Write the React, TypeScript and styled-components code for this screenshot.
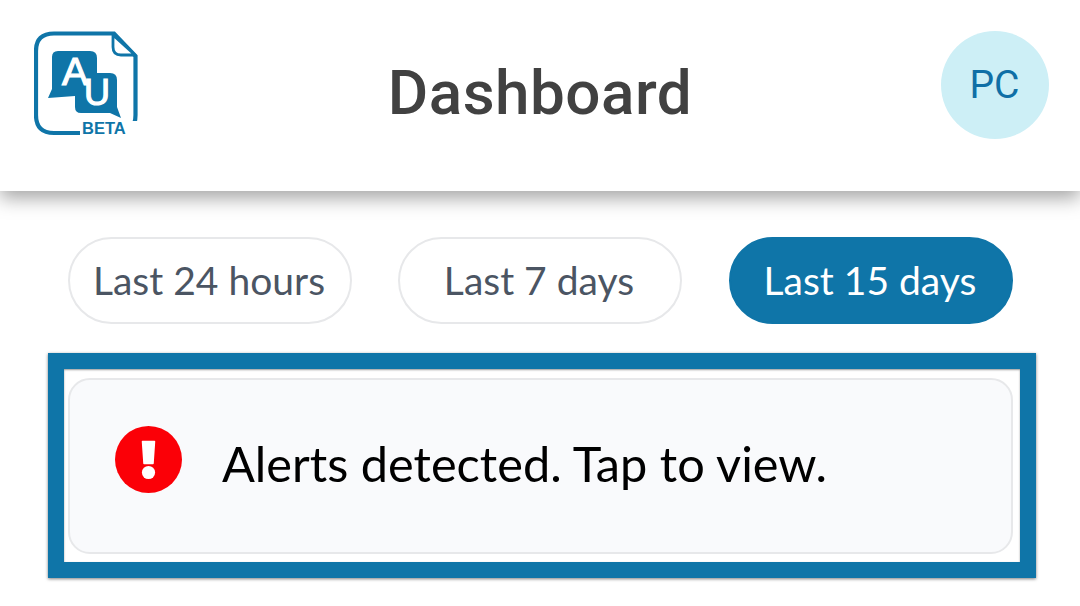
import React from "react";
import styled, { createGlobalStyle } from "styled-components";

const GlobalStyle = createGlobalStyle`
  html, body {
    margin: 0;
    padding: 0;
    background: #fff;
  }
  body {
    width: 1080px;
    height: 606px;
    overflow: hidden;
    font-family: "Lato", sans-serif;
  }
`;

const Header = styled.header`
  height: 191px;
  box-sizing: border-box;
  padding: 31px 31px 0 34px;
  display: flex;
  justify-content: space-between;
  align-items: flex-start;
  background: #fff;
  box-shadow: 0 7px 18px rgba(0, 0, 0, 0.36);
`;

const LogoWrap = styled.div`
  width: 108px;
  height: 108px;
`;

const Title = styled.h1`
  margin: 27px 3px 0 0;
  font-family: "Roboto", sans-serif;
  font-weight: 500;
  font-size: 62px;
  line-height: 70px;
  letter-spacing: 0.5px;
  color: #414141;
`;

const Avatar = styled.div`
  width: 108px;
  height: 108px;
  border-radius: 50%;
  background: #cdeff6;
  color: #0f6fa6;
  font-family: "Roboto", sans-serif;
  font-size: 39px;
  display: flex;
  align-items: center;
  justify-content: center;
  padding-right: 1px;
  box-sizing: border-box;
`;

const Filters = styled.div`
  display: flex;
  gap: 46px;
  padding: 46px 0 0 68px;
`;

const Pill = styled.button<{ $active?: boolean }>`
  width: 284px;
  height: 87px;
  box-sizing: border-box;
  padding: 0 2px 1px 0;
  border-radius: 44px;
  border: 2px solid ${(p) => (p.$active ? "#0f75a8" : "#e7e8ea")};
  background: ${(p) => (p.$active ? "#0f75a8" : "#fff")};
  color: ${(p) => (p.$active ? "#fff" : "#4b5563")};
  font-family: "Lato", sans-serif;
  font-size: 39px;
  &:last-child {
    margin-left: 1px;
  }
`;

const AlertFrame = styled.div`
  width: 988px;
  height: 225px;
  box-sizing: border-box;
  margin: 29px 0 0 48px;
  padding: 9px 7px 8px 4px;
  border: 16px solid #0f75a8;
  background: #fff;
  box-shadow: 0 1px 3px rgba(0, 0, 0, 0.5), inset 0 1px 2px rgba(0, 0, 0, 0.4);
`;

const AlertCard = styled.div`
  height: 100%;
  box-sizing: border-box;
  display: flex;
  align-items: center;
  gap: 40px;
  padding: 0 0 14px 45px;
  background: #f9fafc;
  border: 2px solid #e7e8ea;
  border-radius: 22px;
`;

const AlertText = styled.span`
  font-family: "Lato", sans-serif;
  font-size: 48.7px;
  padding-top: 8px;
  color: #000;
`;

const Logo = () => (
  <svg width="108" height="108" viewBox="0 0 108 108">
    <path
      d="M20 2.5 H80 L101.5 25 V84 Q101.5 102 84 102 H20 Q2 102 2 84 V20 Q2 2.5 20 2.5 Z"
      fill="#fff"
      stroke="#0f75a8"
      strokeWidth="4.2"
    />
    <path d="M79 4 L101 24 H87 Q79 24 79 16 Z" fill="#fff" stroke="#0f75a8" strokeWidth="2.8" strokeLinejoin="round" />
    <path d="M24 20 H56 Q63 20 63 27 V42 H76 Q83 42 83 49 V76 L87 87 L76 82 H47 Q41 82 41 76 V65 L14 67 L18 58 V26 Q18 20 24 20 Z" fill="#0f75a8" />
    <text x="28" y="54" fontFamily="Liberation Sans, sans-serif" fontSize="39" fill="#fff" stroke="#fff" strokeWidth="1.2">A</text>
    <text x="50" y="74" fontFamily="Liberation Sans, sans-serif" fontSize="36" fill="#fff" stroke="#fff" strokeWidth="1.2">U</text>
    <rect x="46" y="90" width="62" height="18" fill="#fff" />
    <text x="48" y="102.5" fontFamily="Liberation Sans, sans-serif" fontSize="16.5" fontWeight="700" fill="#0f75a8">BETA</text>
  </svg>
);

const AlertIcon = () => (
  <svg width="67" height="67" viewBox="0 0 67 67">
    <circle cx="33.5" cy="33.5" r="33.5" fill="#fb0007" />
    <path d="M27.5 15.5 H39.5 L38 37.5 H29 Z" fill="#fff" strokeLinejoin="round" stroke="#fff" strokeWidth="1.5" />
    <circle cx="33.5" cy="46.5" r="6.6" fill="#fff" />
  </svg>
);

export default function App() {
  return (
    <>
      <GlobalStyle />
      <Header>
        <LogoWrap>
          <Logo />
        </LogoWrap>
        <Title>Dashboard</Title>
        <Avatar>PC</Avatar>
      </Header>
      <Filters>
        <Pill>Last 24 hours</Pill>
        <Pill>Last 7 days</Pill>
        <Pill $active>Last 15 days</Pill>
      </Filters>
      <AlertFrame>
        <AlertCard>
          <AlertIcon />
          <AlertText>Alerts detected. Tap to view.</AlertText>
        </AlertCard>
      </AlertFrame>
    </>
  );
}
